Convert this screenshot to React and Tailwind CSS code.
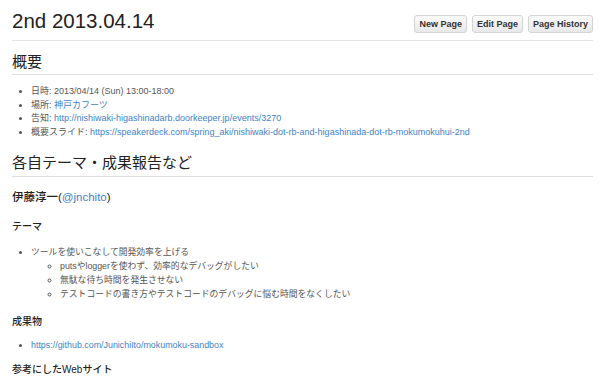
import React from 'react';

const link = 'text-[#4183c4]';

const Button = ({ children }) => (
  <button className="h-[18px] px-[4px] rounded-[3px] border border-[#d4d4d4] bg-gradient-to-b from-[#fbfbfb] to-[#e8e8e8] text-[9px] font-bold text-[#333] leading-none">
    {children}
  </button>
);

const App = () => {
  return (
    <div className="w-[600px] h-[383px] overflow-hidden bg-white pl-3 pr-[7px] font-['Liberation_Sans','Noto_Sans_CJK_JP',sans-serif] text-[#333]">
      {/* page header */}
      <div className="flex justify-between items-start h-[41px] border-b border-[#e5e5e5]">
        <h1 className="pt-[9px] text-[20.5px] leading-[24px] text-[#222]">2nd 2013.04.14</h1>
        <div className="flex gap-[5px] mt-[15px]">
          <Button>New Page</Button>
          <Button>Edit Page</Button>
          <Button>Page History</Button>
        </div>
      </div>

      <h2 className="mt-[12px] pb-[3px] text-[15px] leading-[18px] text-[#222] border-b border-[#ddd]">概要</h2>
      <ul className="mt-[10px] pl-[19px] list-disc text-[9px] leading-[13.5px] text-[#555]">
        <li>日時: 2013/04/14 (Sun) 13:00-18:00</li>
        <li>場所: <a className={link}>神戸カフーツ</a></li>
        <li>告知: <a className={link}>http://nishiwaki-higashinadarb.doorkeeper.jp/events/3270</a></li>
        <li>概要スライド: <a className={link}>https://speakerdeck.com/spring_aki/nishiwaki-dot-rb-and-higashinada-dot-rb-mokumokuhui-2nd</a></li>
      </ul>

      <h2 className="mt-[15px] pb-[4px] text-[15px] leading-[18px] text-[#222] border-b border-[#ddd]">各自テーマ・成果報告など</h2>

      <h3 className="mt-[13px] text-[11.5px] leading-[14px] font-medium text-[#222]">
        伊藤淳一(<a className={link}>@jnchito</a>)
      </h3>

      <h4 className="mt-[17px] text-[10px] leading-[12px] font-medium text-[#222]">テーマ</h4>
      <ul className="mt-[12px] pl-[19px] list-disc text-[8.8px] leading-[14px] text-[#555]">
        <li>
          ツールを使いこなして開発効率を上げる
          <ul className="pl-[29px] list-[circle]">
            <li>putsやloggerを使わず、効率的なデバッグがしたい</li>
            <li>無駄な待ち時間を発生させない</li>
            <li>テストコードの書き方やテストコードのデバッグに悩む時間をなくしたい</li>
          </ul>
        </li>
      </ul>

      <h4 className="mt-[15px] text-[10px] leading-[12px] font-medium text-[#222]">成果物</h4>
      <ul className="mt-[10px] pl-[19px] list-disc text-[8.9px] leading-[14px] text-[#555]">
        <li><a className={link}>https://github.com/JunichiIto/mokumoku-sandbox</a></li>
      </ul>

      <h4 className="mt-[12px] text-[10px] leading-[12px] font-medium text-[#222]">参考にしたWebサイト</h4>
    </div>
  );
};

export default App;
